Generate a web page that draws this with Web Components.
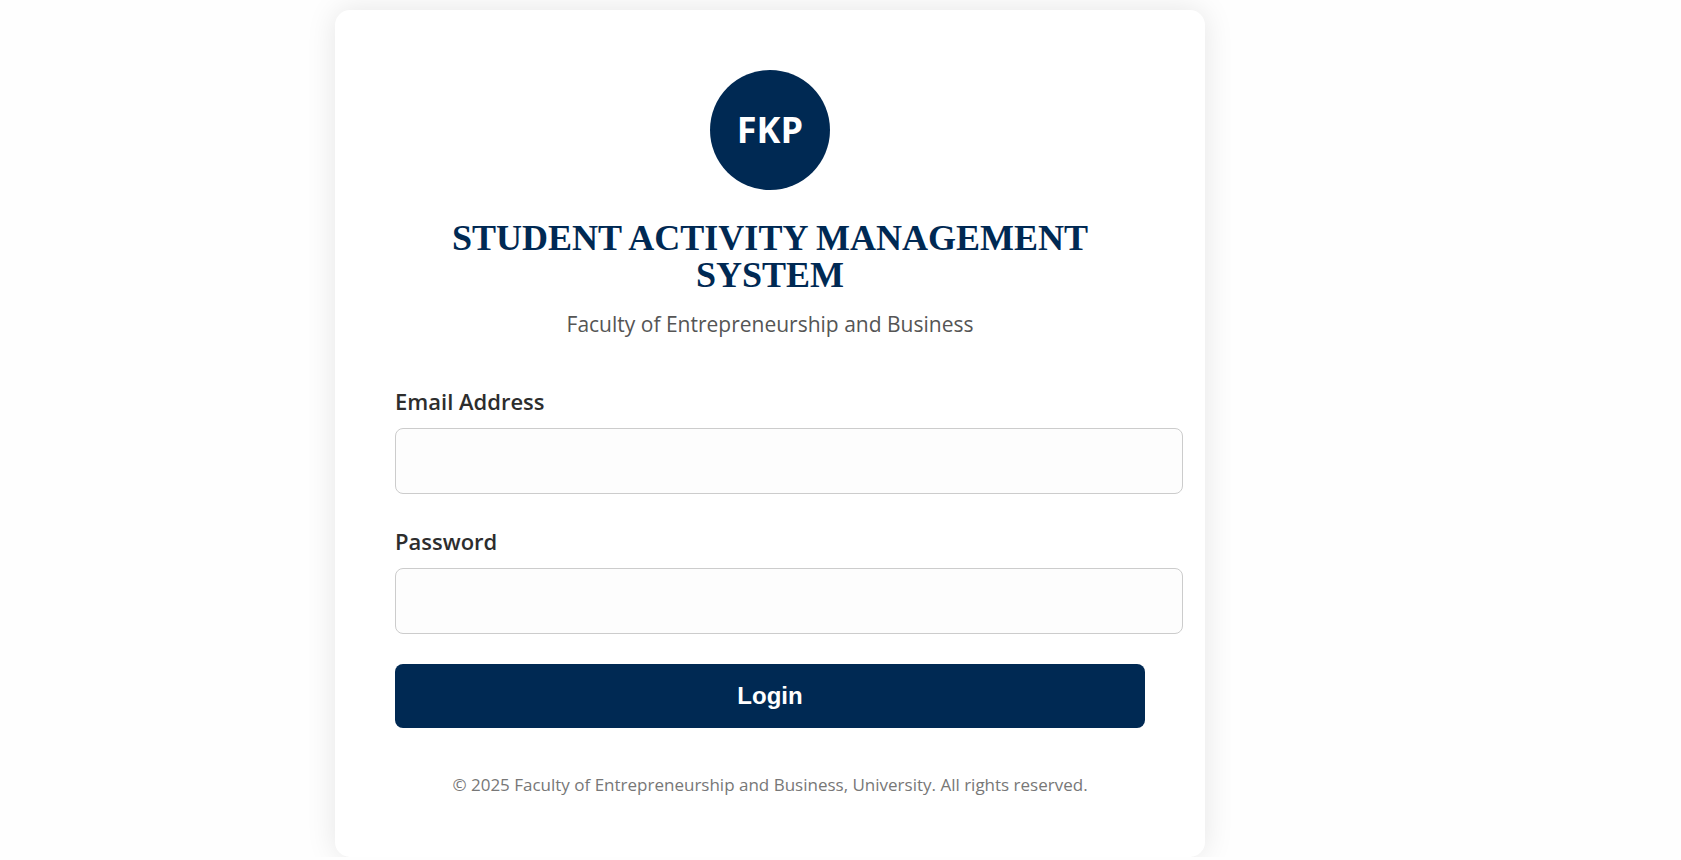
<!DOCTYPE html>
<html lang="en">
<head>
<meta charset="utf-8">
<meta name="viewport" content="width=device-width, initial-scale=1">
<title>Student Activity Management System</title>
<style>
  :root { --navy: #002953; }
  body { margin: 0; background: #fefefe; color: #2d2d2d; font-family: "Open Sans", "Noto Sans", sans-serif; }
</style>
</head>
<body>
<login-page>
  <login-card>
    <brand-header mark="FKP">
      <span slot="title">STUDENT ACTIVITY MANAGEMENT SYSTEM</span>
      <span slot="subtitle">Faculty of Entrepreneurship and Business</span>
    </brand-header>
    <login-form></login-form>
    <span slot="footer">© 2025 Faculty of Entrepreneurship and Business, University. All rights reserved.</span>
  </login-card>
</login-page>

<template id="page">
  <style>
    :host { display: flex; justify-content: center; padding: 10px 141px 0 0; }
    @media (max-width: 1160px) { :host { padding: 10px 10px 0; } }
  </style>
  <slot></slot>
</template>

<template id="card">
  <style>
    :host {
      display: block; box-sizing: border-box; width: 100%; max-width: 870px; padding: 60px;
      background: #fff; border-radius: 15px; box-shadow: 0 0 30px rgba(0, 0, 0, .1);
    }
    footer { margin-top: 45px; text-align: center; font-size: 17px; line-height: 24px; color: #777; }
  </style>
  <slot></slot>
  <footer><slot name="footer"></slot></footer>
</template>

<template id="brand">
  <style>
    :host { display: flex; flex-direction: column; align-items: center; text-align: center; }
    .mark {
      display: grid; place-items: center; width: 120px; height: 120px; border-radius: 50%;
      background: var(--navy); color: #fff; font-size: 36px; font-weight: 700; line-height: 50px;
    }
    h1 {
      margin: 30px 0 15px; color: var(--navy);
      font: 700 36px/37px "Liberation Serif", serif;
    }
    p { margin: 0 0 45px; font-size: 21px; line-height: 30px; color: #555; }
  </style>
  <div class="mark"></div>
  <h1><slot name="title"></slot></h1>
  <p><slot name="subtitle"></slot></p>
</template>

<template id="field">
  <style>
    :host { display: block; margin-bottom: 30px; }
    label { display: block; margin-bottom: 10px; font-size: 22px; font-weight: 600; line-height: 34px; }
    /* The padding and border are added to the full column width. */
    input {
      display: block; box-sizing: content-box; width: 100%; height: 28px; margin: 0; padding: 18px;
      border: 1px solid #ccc; border-radius: 8px; background: #fdfdfd; font: inherit; font-size: 22px;
    }
    input:focus { outline: none; border-color: var(--navy); }
  </style>
  <label for="control"></label>
  <input id="control">
</template>

<template id="form">
  <style>
    :host { display: block; }
    button {
      display: block; width: 100%; padding: 18px; border: 0; border-radius: 8px; cursor: pointer;
      background: var(--navy); color: #fff; font: 700 24px/28px "Liberation Sans", sans-serif;
    }
  </style>
  <form>
    <login-field name="email" type="email" label="Email Address"></login-field>
    <login-field name="password" type="password" label="Password"></login-field>
    <button type="submit">Login</button>
  </form>
</template>

<script>
  class TemplateElement extends HTMLElement {
    constructor() {
      super();
      const template = document.getElementById(this.constructor.template);
      this.attachShadow({ mode: "open" }).append(template.content.cloneNode(true));
    }
  }

  class LoginPage extends TemplateElement { static template = "page"; }
  class LoginCard extends TemplateElement { static template = "card"; }

  class BrandHeader extends TemplateElement {
    static template = "brand";
    connectedCallback() {
      this.shadowRoot.querySelector(".mark").textContent = this.getAttribute("mark");
    }
  }

  class LoginField extends TemplateElement {
    static template = "field";
    static formAssociated = true;
    connectedCallback() {
      const input = this.shadowRoot.querySelector("input");
      const internals = this.internals ??= this.attachInternals();
      this.shadowRoot.querySelector("label").textContent = this.getAttribute("label");
      input.type = this.getAttribute("type");
      input.oninput = () => internals.setFormValue(input.value);
    }
  }

  class LoginForm extends TemplateElement {
    static template = "form";
    connectedCallback() {
      this.shadowRoot.querySelector("form").onsubmit = event => event.preventDefault();
    }
  }

  customElements.define("login-page", LoginPage);
  customElements.define("login-card", LoginCard);
  customElements.define("brand-header", BrandHeader);
  customElements.define("login-field", LoginField);
  customElements.define("login-form", LoginForm);
</script>
</body>
</html>
